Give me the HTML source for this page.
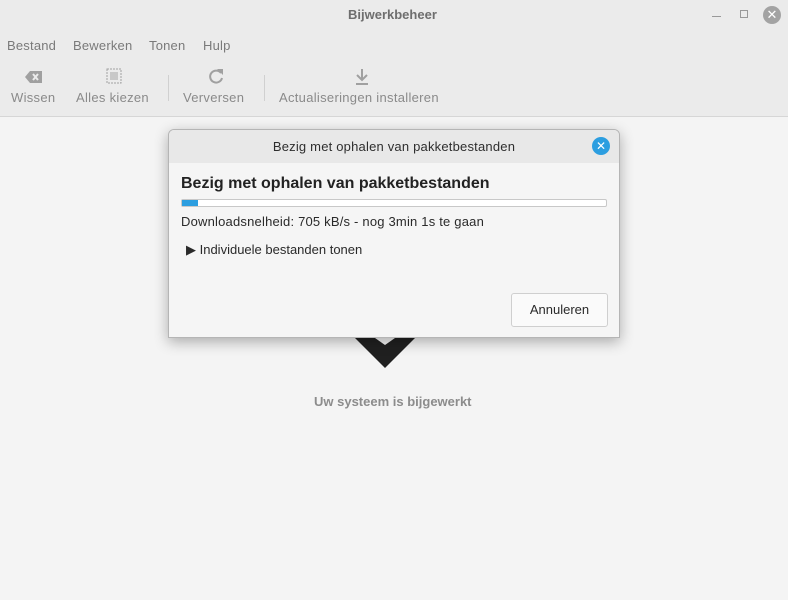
<!DOCTYPE html>
<html><head><style>
*{margin:0;padding:0;box-sizing:border-box}
body{width:788px;height:600px;overflow:hidden;background:#f4f4f4;font-family:"Liberation Sans","DejaVu Sans",sans-serif;font-size:13px;position:relative}
.hdr{position:absolute;left:0;top:0;width:788px;height:117px;background:#ebebeb;border-bottom:1px solid #d6d6d6}
.t{position:absolute;white-space:nowrap}
.g{color:#8a8a8a;letter-spacing:.3px}
.m{color:#7a7a7a;font-size:13px;letter-spacing:.2px}
.dlg{position:absolute;left:168px;top:129px;width:452px;height:209px;background:#f5f5f5;border:1px solid #b5b5b5;border-radius:6px 6px 0 0;box-shadow:0 4px 14px rgba(0,0,0,.3);overflow:hidden}
.dt{height:33px;background:#e8e8e8;text-align:center;line-height:34px;font-size:13px;color:#2e2e2e;letter-spacing:.2px}
</style></head><body>
<div class="hdr">
<div class="t" style="left:348px;top:7px;font-weight:bold;color:#6e6e6e">Bijwerkbeheer</div>
<div style="position:absolute;left:712px;top:16px;width:9px;height:1px;background:#999"></div>
<div style="position:absolute;left:740px;top:10px;width:8px;height:8px;border:1px solid #999"></div>
<div style="position:absolute;left:763px;top:6px;width:18px;height:18px;border-radius:50%;background:#a3a3a3;color:#fff;font-size:13px;font-weight:bold;text-align:center;line-height:18px">✕</div>
<div class="t m" style="left:7px;top:38px">Bestand</div>
<div class="t m" style="left:73px;top:38px">Bewerken</div>
<div class="t m" style="left:149px;top:38px">Tonen</div>
<div class="t m" style="left:203px;top:38px">Hulp</div>
<svg style="position:absolute;left:25px;top:70px" width="18" height="14"><path d="M5 1H17V13H5L0 7Z" fill="#a0a0a0"/><path d="M8 4L13 10M13 4L8 10" stroke="#ebebeb" stroke-width="2"/></svg>
<svg style="position:absolute;left:106px;top:68px" width="16" height="16"><rect x="1" y="1" width="14" height="14" fill="none" stroke="#a0a0a0" stroke-dasharray="2 1"/><rect x="4" y="4" width="8" height="8" fill="#c8c8c8"/></svg>
<svg style="position:absolute;left:207px;top:68px" width="18" height="18"><path d="M14 5A6 6 0 1 0 15 10" fill="none" stroke="#a0a0a0" stroke-width="2"/><path d="M10 1L16 1L16 7Z" fill="#a0a0a0"/></svg>
<svg style="position:absolute;left:354px;top:68px" width="16" height="18"><path d="M8 1V12M3 7L8 12L13 7" fill="none" stroke="#a0a0a0" stroke-width="2"/><path d="M2 16H14" stroke="#a0a0a0" stroke-width="2"/></svg>
<div class="t g" style="left:11px;top:90px">Wissen</div>
<div class="t g" style="left:76px;top:90px">Alles kiezen</div>
<div style="position:absolute;left:168px;top:75px;width:1px;height:26px;background:#d0d0d0"></div>
<div class="t g" style="left:183px;top:90px">Verversen</div>
<div style="position:absolute;left:264px;top:75px;width:1px;height:26px;background:#d0d0d0"></div>
<div class="t g" style="left:279px;top:90px">Actualiseringen installeren</div>
</div>
<svg style="position:absolute;left:354px;top:330px" width="62" height="40"><path d="M1 8L31 38L61 8L41 8L31 15L21 8Z" fill="#202020"/></svg>
<div class="t" style="left:314px;top:394px;font-weight:bold;color:#8c8c8c">Uw systeem is bijgewerkt</div>
<div class="dlg">
<div class="dt">Bezig met ophalen van pakketbestanden</div>
<div style="position:absolute;right:9px;top:7px;width:18px;height:18px;border-radius:50%;background:#2c9ee0;color:#fff;font-size:12px;font-weight:bold;text-align:center;line-height:18px">✕</div>
<div class="t" style="left:12px;top:45px;font-size:16px;font-weight:bold;color:#222">Bezig met ophalen van pakketbestanden</div>
<div style="position:absolute;left:12px;top:69px;width:426px;height:8px;border:1px solid #c8c8c8;border-radius:2px;background:#fff"><div style="width:16px;height:6px;background:#2c9ee0"></div></div>
<div class="t" style="left:12px;top:84px;color:#2a2a2a;letter-spacing:.2px">Downloadsnelheid: 705 kB/s - nog 3min 1s te gaan</div>
<div class="t" style="left:17px;top:112px;color:#2a2a2a">▶ Individuele bestanden tonen</div>
<div style="position:absolute;left:342px;top:163px;width:97px;height:34px;border:1px solid #cfcfcf;border-radius:3px;background:#fafafa;text-align:center;line-height:32px;color:#2a2a2a">Annuleren</div>
</div>
</body></html>
